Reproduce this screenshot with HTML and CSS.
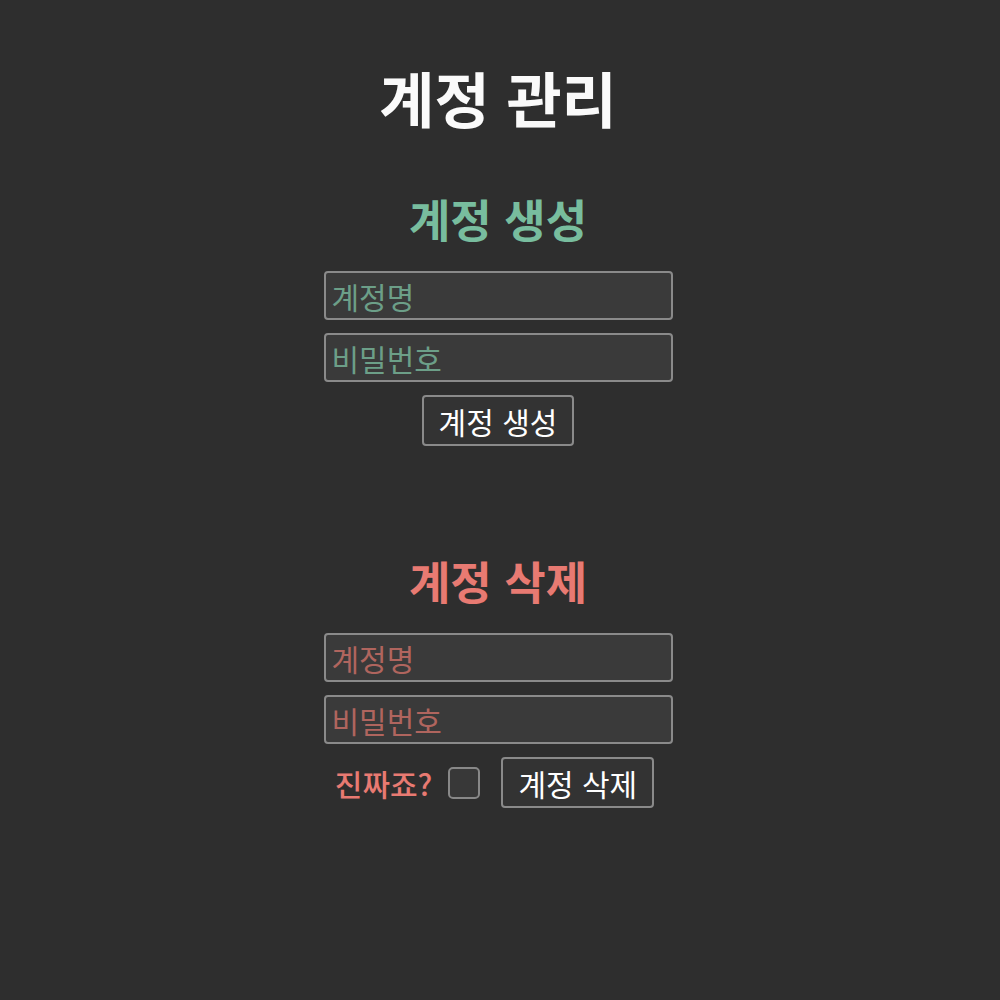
FILE: index.html
```html
<!DOCTYPE html>
<html lang="ko">
<head>
<meta charset="utf-8">
<title>계정 관리</title>
<link rel="stylesheet" href="styles.css">
</head>
<body>
<main class="page">
  <h1 class="title">계정 관리</h1>
  <section class="section create">
    <h2 class="section-title">계정 생성</h2>
    <input class="field" type="text" placeholder="계정명">
    <input class="field" type="password" placeholder="비밀번호">
    <button class="btn">계정 생성</button>
  </section>
  <section class="section delete">
    <h2 class="section-title">계정 삭제</h2>
    <input class="field" type="text" placeholder="계정명">
    <input class="field" type="password" placeholder="비밀번호">
    <div class="confirm-row">
      <label class="confirm-label" for="sure">진짜죠?</label>
      <input class="check" id="sure" type="checkbox">
      <button class="btn">계정 삭제</button>
    </div>
  </section>
</main>
</body>
</html>
```
FILE: styles.css
```css
html, body {
  margin: 0;
  padding: 0;
  background: #2e2e2e;
}
body {
  font-family: "Noto Sans CJK KR", "Noto Sans", sans-serif;
  color: #fff;
}
.page {
  display: flex;
  flex-direction: column;
  align-items: center;
  padding: 59px 4px 0 0;
}
.title {
  margin: 0;
  font-size: 60px;
  font-weight: 700;
  line-height: 76px;
  color: #fafafa;
}
.section {
  display: flex;
  flex-direction: column;
  align-items: center;
  gap: 13px;
}
.create { margin-top: 54px; }
.delete { margin-top: 105px; }
.section-title {
  margin: 0 0 9px;
  font-size: 45px;
  font-weight: 700;
  line-height: 60px;
}
.create .section-title { color: #78bd9e; }
.delete .section-title { color: #e87a72; }
.field {
  box-sizing: border-box;
  width: 349px;
  height: 49px;
  margin: 0;
  padding: 0 6px;
  background: #3a3a3a;
  border: 2px solid #8a8a8a;
  border-radius: 4px;
  font-family: inherit;
  font-size: 30px;
  color: #fff;
  outline: none;
}
.create .field::placeholder { color: #6c9f88; }
.delete .field::placeholder { color: #b0655e; }
.btn {
  box-sizing: border-box;
  height: 51px;
  padding: 0 15px;
  background: #333;
  border: 2px solid #8a8a8a;
  border-radius: 4px;
  font-family: inherit;
  font-size: 30px;
  color: #fff;
}
.confirm-row {
  display: flex;
  align-items: center;
  padding-right: 7px;
}
.confirm-label {
  font-size: 30px;
  font-weight: 500;
  color: #e87a72;
}
.check {
  appearance: none;
  box-sizing: border-box;
  width: 32px;
  height: 32px;
  margin: 0 21px 0 16px;
  background: #383838;
  border: 2px solid #888;
  border-radius: 5px;
}
```
